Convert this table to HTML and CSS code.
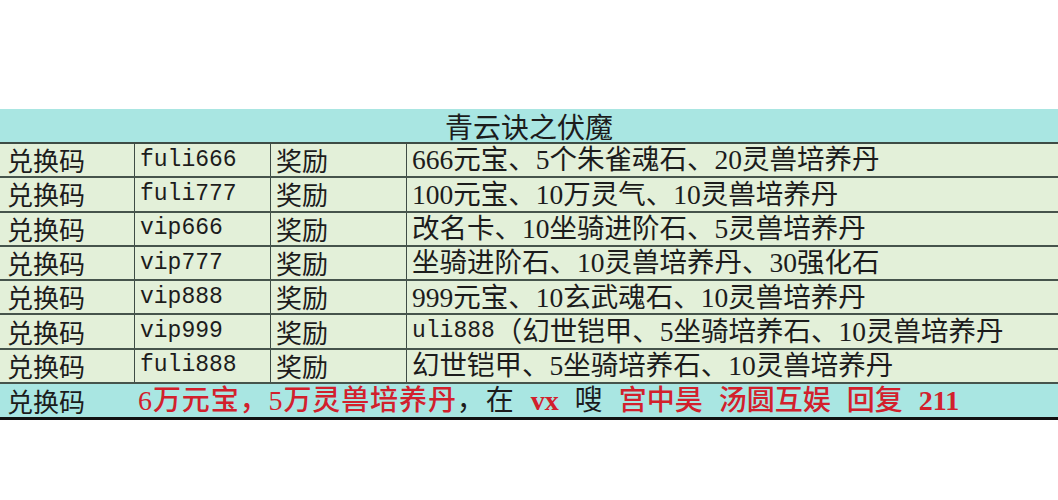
FILE: index.html
```html
<!DOCTYPE html>
<html lang="zh">
<head>
<meta charset="utf-8">
<title>青云诀之伏魔</title>
<link rel="stylesheet" href="styles.css">
</head>
<body>
<div class="page">
  <div class="sheet">
    <div class="title">青云诀之伏魔</div>
    <div class="row"><div class="c c1">兑换码</div><div class="c c2">fuli666</div><div class="c c3">奖励</div><div class="c c4">666元宝、5个朱雀魂石、20灵兽培养丹</div></div>
    <div class="row"><div class="c c1">兑换码</div><div class="c c2">fuli777</div><div class="c c3">奖励</div><div class="c c4">100元宝、10万灵气、10灵兽培养丹</div></div>
    <div class="row"><div class="c c1">兑换码</div><div class="c c2">vip666</div><div class="c c3">奖励</div><div class="c c4">改名卡、10坐骑进阶石、5灵兽培养丹</div></div>
    <div class="row"><div class="c c1">兑换码</div><div class="c c2">vip777</div><div class="c c3">奖励</div><div class="c c4">坐骑进阶石、10灵兽培养丹、30强化石</div></div>
    <div class="row"><div class="c c1">兑换码</div><div class="c c2">vip888</div><div class="c c3">奖励</div><div class="c c4">999元宝、10玄武魂石、10灵兽培养丹</div></div>
    <div class="row"><div class="c c1">兑换码</div><div class="c c2">vip999</div><div class="c c3">奖励</div><div class="c c4"><span class="mono-in">uli888</span>（幻世铠甲、5坐骑培养石、10灵兽培养丹</div></div>
    <div class="row"><div class="c c1">兑换码</div><div class="c c2">fuli888</div><div class="c c3">奖励</div><div class="c c4">幻世铠甲、5坐骑培养石、10灵兽培养丹</div></div>
    <div class="last">
      <div class="c c1">兑换码</div>
      <div class="promo">
        <span class="seg1"><span class="red">6万元宝，5万灵兽培养丹</span><span class="blk">，在</span></span>
        <span class="red bold-lat">vx</span>
        <span class="blk">嗖</span>
        <span class="red">宫中昊</span>
        <span class="red">汤圆互娱</span>
        <span class="red">回复</span>
        <span class="red bold-lat">211</span>
      </div>
    </div>
  </div>
</div>
</body>
</html>
```
FILE: styles.css
```css
html, body {
  margin: 0;
  padding: 0;
  background: #ffffff;
}

.page {
  width: 1058px;
  height: 500px;
  padding-top: 109px;
  box-sizing: border-box;
  font-family: "Liberation Serif", "Noto Sans CJK SC", serif;
  color: #1c1c1c;
  font-size: 28px;
}

.sheet {
  display: flex;
  flex-direction: column;
}

.title {
  height: 32px;
  padding-top: 1px;
  background: #a9e6e2;
  border-bottom: 2px solid #3e4c45;
  display: flex;
  align-items: center;
  justify-content: center;
  line-height: 1;
  font-family: "Noto Sans CJK SC", sans-serif;
}

.row {
  display: grid;
  grid-template-columns: 135px 136px 136px 1fr;
  height: 32.3px;
  background: #e3f0d9;
  border-bottom: 2px solid #46544c;
}

.c {
  display: flex;
  align-items: center;
  line-height: 1;
  white-space: nowrap;
}

.c1 {
  padding-left: 7px;
  border-right: 1px solid #3e4c45;
  font-family: "Noto Sans CJK SC", sans-serif;
  font-size: 26px;
}

.c2 {
  padding-left: 5px;
  border-right: 1px solid #3e4c45;
  font-family: "Liberation Mono", monospace;
  font-size: 23px;
}

.c3 {
  padding-left: 5px;
  border-right: 1px solid #3e4c45;
  font-family: "Noto Sans CJK SC", sans-serif;
  font-size: 26px;
}

.c4 {
  padding-left: 5px;
  font-size: 27.5px;
}

.mono-in {
  font-family: "Liberation Mono", monospace;
  font-size: 23px;
}

.last {
  display: grid;
  grid-template-columns: 135px 1fr;
  height: 33px;
  background: #a9e6e2;
  border-bottom: 3px solid #111111;
}

.last .c1 {
  border-right: none;
}

.promo {
  display: flex;
  align-items: center;
  gap: 16px;
  padding-left: 3px;
  line-height: 1;
  white-space: nowrap;
}

.seg1 {
  letter-spacing: 0.9px;
}

.red {
  color: #d2202c;
  font-weight: 500;
}

.blk {
  color: #1c1c1c;
}

.bold-lat {
  font-weight: 700;
}
```
